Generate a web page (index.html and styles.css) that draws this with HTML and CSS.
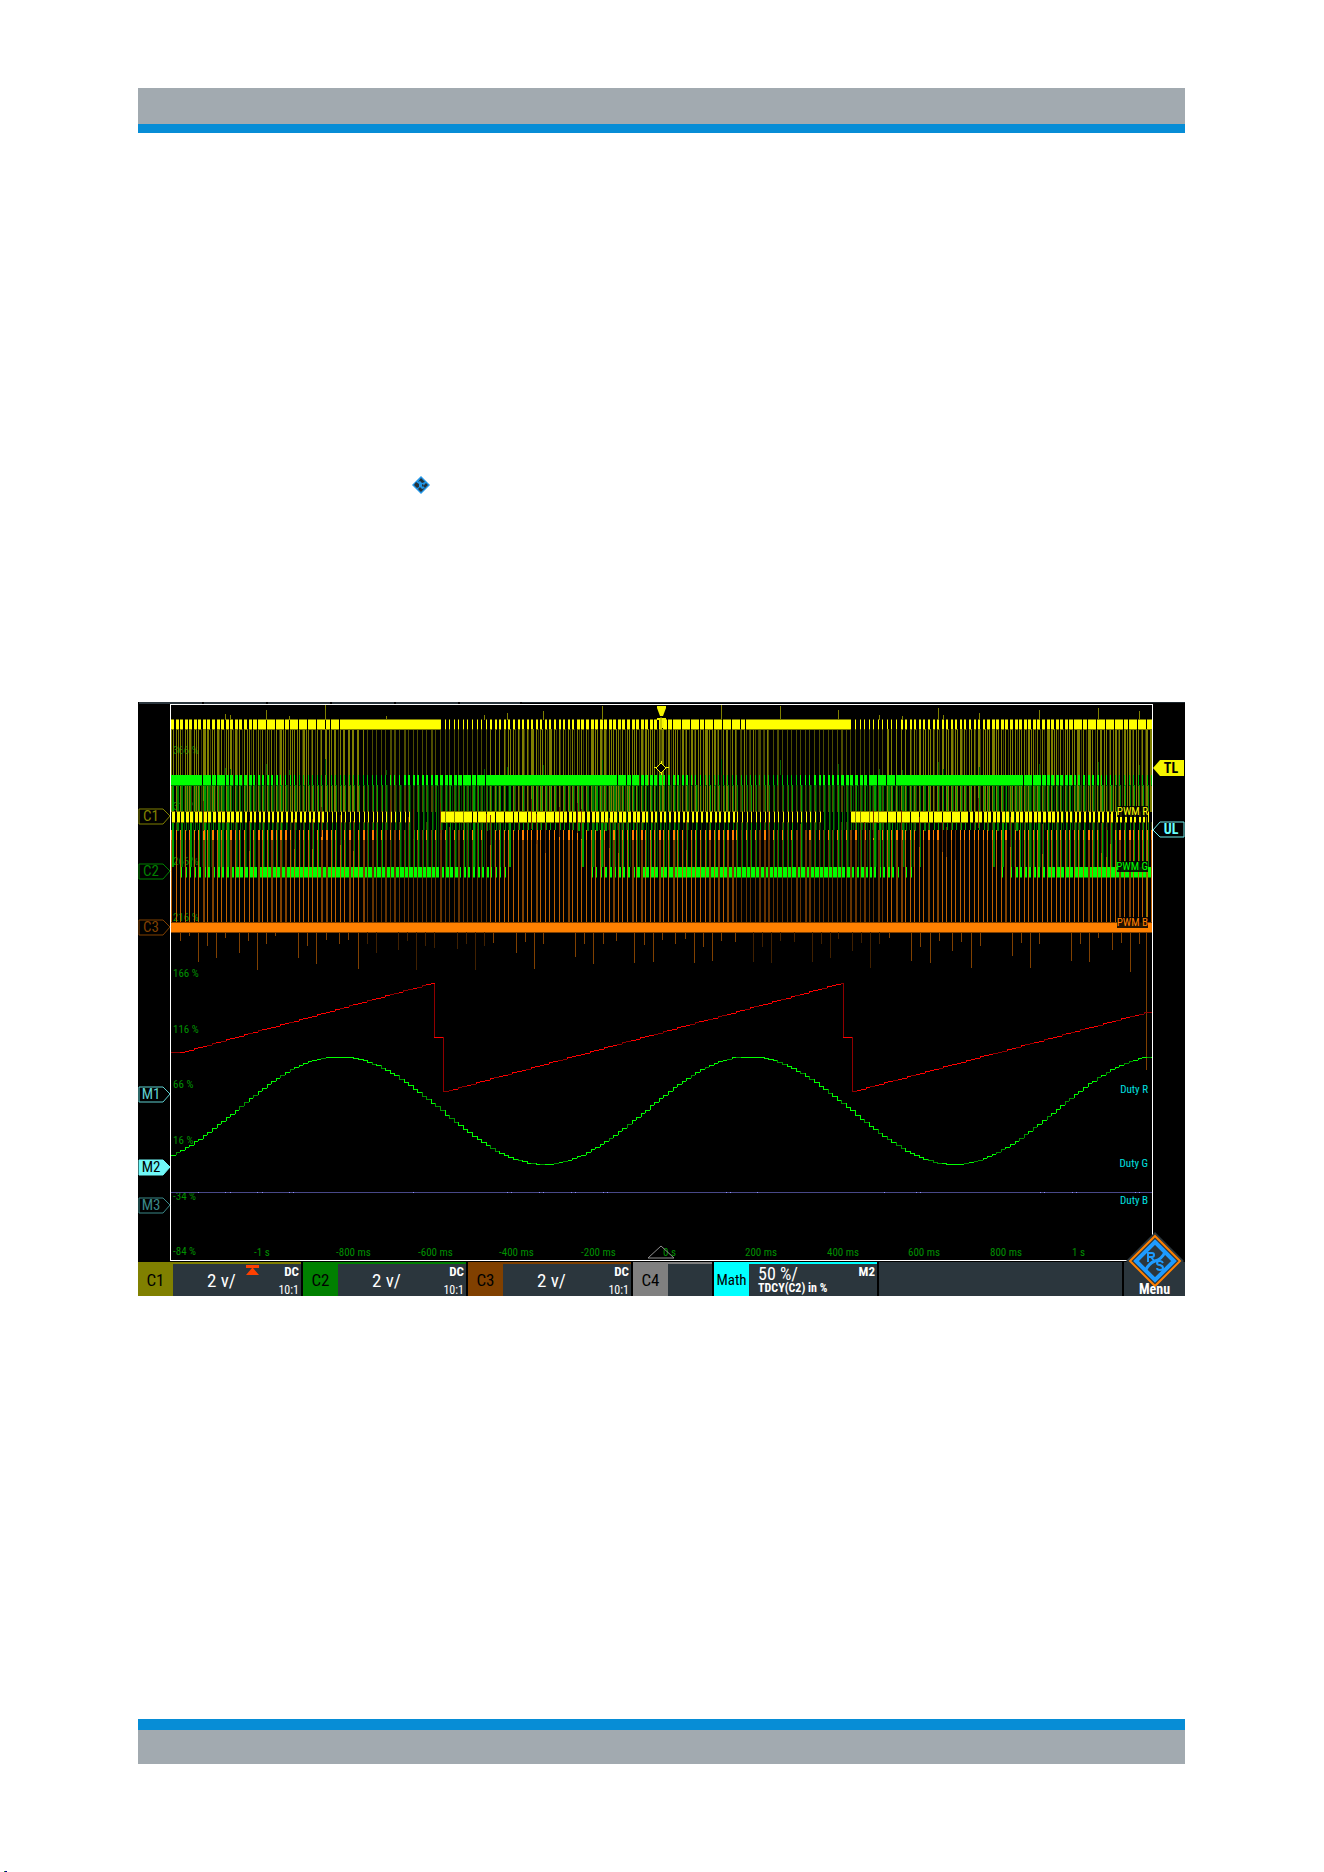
FILE: index.html
```
<!DOCTYPE html>
<html lang="en">

<head>
    <meta charset="UTF-8">
    <meta name="viewport" content="width=device-width, initial-scale=1.0">
    <title>PWM duty cycle</title>
    <link rel="stylesheet" href="styles.css">
</head>

<body>

    <header class="band band-top"></header>

    <main>
        <svg class="small-logo" viewBox="0 0 20 20" aria-hidden="true">
            <path d="M10 1 L19 10 L10 19 L1 10 Z" fill="#2196e8" />
            <path d="M10 3 L14 7 L11 8 L9 6 L7 7 Z M5 7 L8 9 L8 12 L6 13 L3 10 Z M15 8 L17 10 L14 13 L12 11 Z M9 12 L11 14 L14 13 L10 17 L7 14 Z" fill="#26323a" />
            <path d="M11 9 L13 10 L11 12 Z" fill="#26323a" />
        </svg>

        <section class="scope">
            <svg class="screen" viewBox="0 0 1047 560" role="img" aria-label="Oscilloscope screen">
                <rect width="1047" height="560" fill="#000" />
                <path d="M1 0H64V2H1Z M66 0H128V2H66Z M130 0H192V2H130Z M194 0H256V2H194Z M258 0H320V2H258Z M322 0H382V2H322Z" fill="#2b363d" />
                <path d="M384 0H1047V1H384Z" fill="#1c262c" />
                <rect x="32" y="2" width="983" height="557" fill="#fff" />
                <rect x="33" y="3" width="981" height="555" fill="#000" />

                <g id="axis" class="axis"></g>
                <g id="traces" shape-rendering="crispEdges"></g>

                <!-- trace names -->
                <g class="trace-name">
                    <path d="M979 104H1010V115H979Z M979 159H1010V170H979Z M979 215H1010V226H979Z" fill="#000" fill-opacity="0.85" />
                    <text x="1010" y="113" fill="#ffff00">PWM R</text>
                    <text x="1010" y="168" fill="#00ff00">PWM G</text>
                    <text x="1010" y="224" fill="#ff8000">PWM B</text>
                    <text x="1010" y="391" fill="#00e0e0">Duty R</text>
                    <text x="1010" y="465" fill="#00e0e0">Duty G</text>
                    <text x="1010" y="502" fill="#00e0e0">Duty B</text>
                </g>

                <!-- channel markers -->
                <g id="markers" class="markers"></g>
                <path d="M1015 66 L1022 58 H1046 V74 H1022 Z" fill="#f5f500" />
                <text class="level" x="1033" y="71" fill="#000">TL</text>
                <path d="M1015 128 L1022 120 H1046 V135 H1022 Z" fill="#000" stroke="#6feaea" />
                <text class="level" x="1033" y="132" fill="#6ff">UL</text>

                <!-- trigger point -->
                <path d="M519 4 H528 V6 L525 14 H522 L519 6 Z M519 16 H528 V18 H526 V26 H521 V18 H519 Z" fill="#f5f500" />
                <path d="M523 15 V61 M523 71 V73" stroke="#a0a000" />
                <path d="M523 61 L528 66 L523 71 L518 66 Z" fill="#000" stroke="#f5f500" />
                <path d="M516 65H519V66H516Z M528 65H531V66H528Z M523 59H524V62H523Z M523 70H524V73H523Z" fill="#f5f500" />
                <path d="M523 544 L536 556 H510 Z" fill="none" stroke="#909090" />
            </svg>

            <div class="toolbar">
                <button class="channel ch1">
                    <span class="tag">C1</span>
                    <span class="info">
                        <span class="scale">2 v/</span>
                        <svg class="clip" viewBox="0 0 14 10" aria-hidden="true"><path d="M0 0H13V3H0Z M6 3H7L13 10H0Z" fill="#ff4000" /></svg>
                        <span class="probe"><b>DC</b><span>10:1</span></span>
                    </span>
                </button>
                <button class="channel ch2">
                    <span class="tag">C2</span>
                    <span class="info">
                        <span class="scale">2 v/</span>
                        <span class="probe"><b>DC</b><span>10:1</span></span>
                    </span>
                </button>
                <button class="channel ch3">
                    <span class="tag">C3</span>
                    <span class="info">
                        <span class="scale">2 v/</span>
                        <span class="probe"><b>DC</b><span>10:1</span></span>
                    </span>
                </button>
                <button class="channel ch4">
                    <span class="tag">C4</span>
                    <span class="info"></span>
                </button>
                <button class="channel math">
                    <span class="tag">Math</span>
                    <span class="info">
                        <span class="formula"><span>50 %/</span><b>TDCY(C2) in %</b></span>
                        <span class="probe"><b>M2</b></span>
                    </span>
                </button>
                <div class="empty"></div>
                <button class="menu">
                    <svg class="menu-logo" viewBox="0 0 58 58" aria-hidden="true">
                        <path d="M29 0 L58 29 L29 58 L0 29 Z" fill="#2b363d" />
                        <path d="M29 4 L54 29 L29 54 L4 29 Z" fill="none" stroke="#ff8000" stroke-width="2" />
                        <path d="M29 10 L48 29 L29 48 L10 29 Z" fill="none" stroke="#1e9bff" stroke-width="4" />
                        <path d="M19 39 Q23 31 29 29 Q36 27 39 20" fill="none" stroke="#1e9bff" stroke-width="3" />
                        <path d="M22 30 V21 H26 Q28 21 28 23 Q28 25 26 25 H22 M25 25 L29 30" fill="none" stroke="#1e9bff" stroke-width="2" />
                        <path d="M37 31 Q36 29 34 29 Q31 29 31 31 Q31 33 34 33 Q37 34 37 36 Q37 38 34 38 Q31 38 31 36" fill="none" stroke="#1e9bff" stroke-width="2" />
                    </svg>
                    <span class="menu-text">Menu</span>
                </button>
            </div>
        </section>
    </main>

    <footer class="band band-bottom"></footer>
    <div class="page-mark"></div>

    <script src="script.js"></script>
</body>

</html>
```
FILE: styles.css
```
html,
body {
    margin: 0;
    padding: 0;
    background: #fff;
    font-family: "Liberation Sans Narrow", "Roboto Condensed", "Liberation Sans", Arial, sans-serif;
}

.band {
    box-sizing: border-box;
    margin: 0 139px 0 138px;
    background: #a2aab0;
}

.band-top {
    height: 45px;
    margin-top: 88px;
    border-bottom: 9px solid #078dd6;
}

.band-bottom {
    height: 45px;
    border-top: 11px solid #078dd6;
}

main {
    display: flex;
    flex-direction: column;
    padding: 342px 139px 423px 138px;
}

.small-logo {
    width: 20px;
    height: 20px;
    margin-left: 273px;
    margin-bottom: 207px;
}

.scope {
    background: #000;
    color: #fff;
}

.screen {
    display: block;
    width: 100%;
    height: auto;
}

.axis text {
    font-size: 11px;
    fill: #009000;
}

.trace-name text {
    font-size: 11px;
    text-anchor: end;
}

.markers text {
    font-size: 15px;
    text-anchor: middle;
}

.level {
    font-size: 14px;
    font-weight: bold;
    text-anchor: middle;
}

.toolbar {
    display: grid;
    grid-template-columns: 163fr 163fr 163fr 79fr 163fr 243fr 61fr;
    gap: 2px;
    height: 34px;
}

.toolbar button {
    min-width: 0;
    margin: 0;
    padding: 0;
    border: none;
    font-family: inherit;
    color: #fff;
    background: #2b363d;
    cursor: pointer;
}

.toolbar .channel {
    display: flex;
    border-top: 2px solid;
}

.tag {
    display: flex;
    align-items: center;
    justify-content: center;
    width: 35px;
    height: 32px;
    font-size: 17px;
    color: #000;
}

.info {
    position: relative;
    display: flex;
    flex: 1;
    height: 32px;
    align-items: center;
    justify-content: flex-end;
}

.scale {
    flex: 1;
    padding-left: 34px;
    text-align: left;
    font-size: 19px;
}

.clip {
    position: absolute;
    top: 1px;
    left: 73px;
    width: 14px;
    height: 10px;
}

.probe {
    display: flex;
    flex-direction: column;
    justify-content: space-between;
    align-self: stretch;
    padding: 1px 2px 0 0;
    text-align: right;
    font-size: 13px;
    line-height: 14px;
}

.probe span {
    font-size: 12px;
    line-height: 12px;
}

.toolbar .ch1 {
    border-color: #808000;
}

.ch1 .tag {
    background: #808000;
}

.toolbar .ch2 {
    border-color: #008000;
}

.ch2 .tag {
    background: #008000;
}

.toolbar .ch3 {
    border-color: #804000;
}

.ch3 .tag {
    background: #804000;
}

.toolbar .ch4 {
    border-color: #808080;
}

.ch4 .tag {
    background: #808080;
}

.toolbar .math {
    border-color: #00ffff;
}

.math .tag {
    background: #00ffff;
    font-size: 15px;
}

.formula {
    display: flex;
    flex: 1;
    flex-direction: column;
    padding-left: 9px;
    text-align: left;
    white-space: nowrap;
    font-size: 18px;
    line-height: 17px;
}

.formula b {
    font-size: 12px;
    line-height: 13px;
}

.empty {
    background: #2b363d;
}

.toolbar .menu {
    position: relative;
}

.menu-logo {
    position: absolute;
    left: 50%;
    bottom: 6px;
    width: 58px;
    height: 58px;
    margin-left: -29px;
}

.menu-text {
    position: absolute;
    left: 0;
    right: 0;
    bottom: 0;
    font-size: 14px;
    line-height: 13px;
    font-weight: bold;
}

.page-mark {
    width: 3px;
    height: 1px;
    margin: 107px 0 0 4px;
    background: linear-gradient(90deg, #2a9a2a 33%, #00008b 34%);
}
```
FILE: script.js
```
const svgNS = "http://www.w3.org/2000/svg";
const traces = document.getElementById("traces");
const axis = document.getElementById("axis");
const markers = document.getElementById("markers");

const LEFT = 33;
const RIGHT = 1014;
const PERIOD = 4.56;   // one PWM period on screen
const SWEEP = 409;     // one duty cycle sweep on screen

function add(parent, name, attrs, text) {
    const el = document.createElementNS(svgNS, name);
    for (const key in attrs) {
        el.setAttribute(key, attrs[key]);
    }
    if (text) {
        el.textContent = text;
    }
    parent.appendChild(el);
}

// rectangles are collected per colour and layer
let layer = {};

function box(color, x, y, w, h) {
    x = Math.round(x);
    w = Math.min(Math.max(1, Math.round(w)), RIGHT - x);
    if (x < LEFT || w < 1) {
        return;
    }
    layer[color] = (layer[color] || "") + `M${x} ${y}h${w}v${h}h${-w}z`;
}

function flush() {
    for (const color in layer) {
        add(traces, "path", { d: layer[color], fill: color });
    }
    layer = {};
}

// repeatable noise between 0 and 1
function noise(n) {
    const v = Math.sin(n * 127.1 + 11.7) * 43758.5453;
    return v - Math.floor(v);
}

function dutyR(x) {
    return ((x - 301 + SWEEP * 2) % SWEEP) / SWEEP;
}

function dutyG(x) {
    return 0.5 + 0.5 * Math.cos(2 * Math.PI * (x - 408) / SWEEP);
}

function fades(x) {
    return (x > 225 && x < 350) || (x > 597 && x < 745);
}

const count = Math.ceil((RIGHT - LEFT) / PERIOD);

// edges
for (let i = 0; i < count; i++) {
    const x = LEFT + i * PERIOD;
    const dim = fades(x);
    const r = dutyR(x);
    const g = dutyG(x);

    box(dim ? "#4d4d00" : "#808000", x, 27, noise(i) > 0.8 ? 2 : 1, 83);
    if (r > 0.15 && r < 0.8) {
        box(noise(i + 50) > 0.5 ? "#808000" : "#404000", x + 1 + r * 3, 27, 1, 83);
    }
    if (noise(i + 900) > 0.7) {
        box("#404000", x, 120, 1, 45);
    }

    if (g < 0.95) {
        box(noise(i + 300) > 0.7 ? "#00a000" : "#008000", x + 1, 83, g > 0.6 && noise(i) > 0.5 ? 2 : 1, g > 0.8 && i % 2 ? 46 : 82);
    } else {
        box("#00a000", x + 1, 83, 1, 45);
    }
    if (g > 0.1 && g < 0.9) {
        box("#004000", x + 1 + g * 3, 83, 1, i % 2 ? 45 : 82);
    }
}
flush();

// yellow and green levels
for (let i = 0; i < count; i++) {
    const x = LEFT + i * PERIOD;
    const r = dutyR(x);
    const g = dutyG(x);
    const rHigh = Math.min(0.2 + r * 1.05, 1) * PERIOD;
    const rLow = (1.05 - r) * PERIOD;
    const gHigh = (0.1 + g * 1.1) * PERIOD;
    const gLow = (1.15 - g) * PERIOD;

    box("#808000", x, 17, rHigh, 11);
    box("#ffff00", x, 18, rHigh, 9);
    if (r < 0.93) {
        box("#808000", x + 1, 109, rLow, 12);
        box("#ffff00", x + 1, 110, Math.min(rLow, PERIOD - 1), 10);
    }

    box("#008000", x, 73, gHigh, 11);
    box(g < 0.12 ? "#00c000" : "#00ff00", x, 73, gHigh, 10);
    if (g < 0.9) {
        box("#008000", x + 1, 165, gLow, 11);
        box("#00ff00", x + 1, 165, gLow, 10);
    }
}
flush();

// orange pulses
for (let i = 0; i < count; i++) {
    const x = LEFT + i * PERIOD;
    const dim = fades(x);
    const wide = noise(i + 70) > 0.78;
    box(dim ? "#663300" : wide ? "#804000" : "#c06000", x, 138, wide ? 2 : 1, 82);
    box(dim && i % 2 ? "#804000" : "#ff8000", x, 128, wide ? 2 : 1, 10);
    if (noise(i + 140) > 0.8) {
        box("#703000", x, 128 - Math.round(noise(i) * 34), 1, 30);
    }
    box("#804000", x, 230, 2, 1);
}
box("#804000", LEFT, 220, RIGHT - LEFT, 11);
flush();
box("#ff8000", LEFT, 221, RIGHT - LEFT, 9);
flush();

// overshoot spikes, [x, end]
const up = [[87, 12], [92, 13], [128, 8], [151, 14], [187, 3], [248, 14], [346, 13], [369, 11], [405, 9], [464, 4],
    [583, 3], [642, 4], [700, 8], [741, 13], [764, 14], [800, 6], [805, 13], [841, 11], [901, 8], [960, 6], [1001, 9]];
up.forEach(([x, end]) => {
    box("#808000", x, end, 1, 18 - end);
    box("#006000", x, end + 54, 1, 19 - end);
});

const down = [[42, 239], [51, 234], [60, 260], [69, 244], [78, 256], [87, 236], [101, 251], [110, 239], [119, 268],
    [128, 242], [137, 234], [160, 256], [169, 244], [178, 262], [188, 238], [201, 242], [210, 238], [220, 267], [229, 242],
    [238, 251], [260, 248], [269, 239], [278, 268], [287, 244], [296, 246], [319, 247], [328, 242], [337, 268],
    [346, 244], [355, 241], [378, 251], [387, 240], [396, 267], [405, 242], [437, 255], [446, 242], [455, 262],
    [465, 242], [478, 239], [496, 261], [506, 243], [515, 260], [524, 238], [537, 242], [547, 237], [556, 261],
    [565, 245], [574, 259], [583, 239], [597, 240], [615, 260], [624, 245], [633, 261], [642, 239], [656, 240],
    [674, 260], [683, 242], [692, 256], [700, 237], [714, 249], [723, 241], [732, 266], [741, 242], [751, 236],
    [773, 259], [782, 245], [792, 261], [801, 239], [814, 249], [823, 240], [833, 266], [842, 244], [874, 254],
    [883, 241], [892, 266], [901, 242], [933, 259], [942, 242], [951, 260], [960, 236], [974, 248], [983, 241],
    [992, 270], [1001, 242]];
down.forEach(([x, end]) => {
    box(fades(x) ? "#402000" : "#804000", x, 230, 1, end - 230);
});
box("#808000", 1008, 27, 1, 194);
box("#804000", 1008, 230, 1, 138);

// stepped math trace
function steps(from, to, value, bright, dark) {
    let last = null;
    for (let i = 0; from + i * PERIOD < to; i++) {
        const x = Math.round(from + i * PERIOD);
        const end = Math.min(to, Math.round(from + (i + 1) * PERIOD));
        const y = Math.round(value(x));
        const color = noise(i + from) > 0.72 ? dark : bright;
        box(color, x, y, end - x, 1);
        if (last !== null && last !== y) {
            box(color, x, Math.min(last, y), 1, Math.abs(last - y));
        }
        last = y;
    }
}

// duty R
box("#900000", 33, 350, 9, 1);
steps(42, 297, x => 350 - (x - 42) * 0.276, "#ff0000", "#900000");
steps(306, 705, x => 389 - (x - 306) * 0.273, "#ff0000", "#900000");
steps(714, 1014, x => Math.max(310, 389 - (x - 714) * 0.27), "#ff0000", "#900000");
[296, 705].forEach(x => {
    box("#900000", x, 281, 1, 54);
    box("#ff0000", x, 335, 9, 1);
    box("#900000", x + 9, 335, 1, 55);
});

// duty G
steps(33, 1014, x => Math.max(355, 408 - 54 * Math.cos(2 * Math.PI * (x - 199) / 410)), "#00ff00", "#009000");

// duty B
box("#484888", LEFT, 490, RIGHT - LEFT, 1);
flush();
[60, 87, 92, 119, 124, 151, 155, 275, 369, 373, 401, 405, 433, 437, 465, 469, 588, 592, 619, 746, 778, 782, 902, 906, 934, 938, 997, 1001].forEach(x => {
    box("#9090ff", x, 490, 1, 1);
});
flush();

// axis labels
["366 %", "316 %", "266 %", "216 %", "166 %", "116 %", "66 %", "16 %", "-34 %", "-84 %"].forEach((label, i) => {
    add(axis, "text", { x: 35, y: Math.round(52 + i * 55.7) }, label);
});
["-1 s", "-800 ms", "-600 ms", "-400 ms", "-200 ms", "0 s", "200 ms", "400 ms", "600 ms", "800 ms", "1 s"].forEach((label, i) => {
    add(axis, "text", { x: Math.round(116 + i * 81.8), y: 554 }, label);
});

// channel markers on the left
[
    ["C1", 114, "#808000"],
    ["C2", 169, "#008000"],
    ["C3", 225, "#804000"],
    ["M1", 392, "#5fd0d0"],
    ["M2", 465, "#70f8f8", true],
    ["M3", 503, "#3a8888"]
].forEach(([name, y, color, active]) => {
    add(markers, "path", {
        d: `M1 ${y - 7}H25L32 ${y}L25 ${y + 8}H1Z`,
        fill: active ? color : "#000",
        stroke: color
    });
    add(markers, "text", { x: 13, y: y + 5, fill: active ? "#000" : color }, name);
});
```
